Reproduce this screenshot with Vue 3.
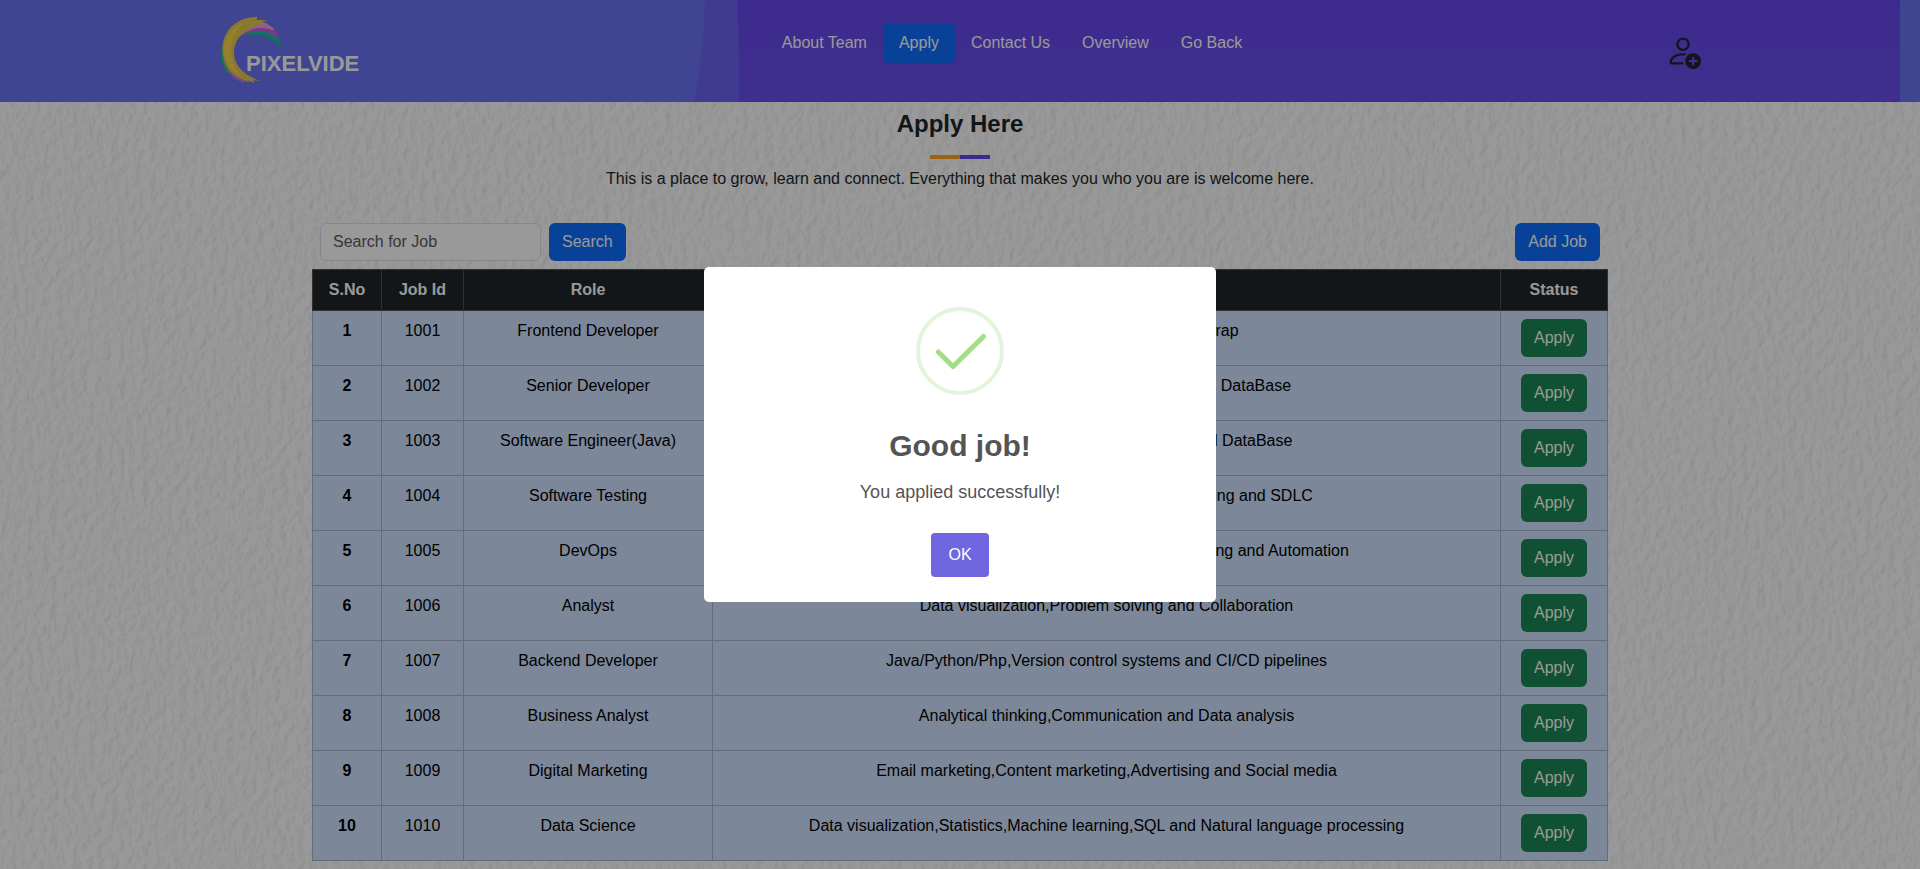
<script setup>
import { ref } from 'vue'

const query = ref('')
const links = [
  { label: 'About Team' },
  { label: 'Apply', active: true },
  { label: 'Contact Us' },
  { label: 'Overview' },
  { label: 'Go Back' },
]
const jobs = [
  { id: 1001, role: 'Frontend Developer', skills: 'HTML,CSS,JavaScript and Bootstrap' },
  { id: 1002, role: 'Senior Developer', skills: 'HTML,CSS,JavaScript,Bootstrap,API and DataBase' },
  { id: 1003, role: 'Software Engineer(Java)', skills: 'Core Java,Advanced Java,JavaScript and DataBase' },
  { id: 1004, role: 'Software Testing', skills: 'Manual testing,Automation testing,Bug tracking and SDLC' },
  { id: 1005, role: 'DevOps', skills: 'Cloud computing,Version control systems,Deploying and Automation' },
  { id: 1006, role: 'Analyst', skills: 'Data visualization,Problem solving and Collaboration' },
  { id: 1007, role: 'Backend Developer', skills: 'Java/Python/Php,Version control systems and CI/CD pipelines' },
  { id: 1008, role: 'Business Analyst', skills: 'Analytical thinking,Communication and Data analysis' },
  { id: 1009, role: 'Digital Marketing', skills: 'Email marketing,Content marketing,Advertising and Social media' },
  { id: 1010, role: 'Data Science', skills: 'Data visualization,Statistics,Machine learning,SQL and Natural language processing' },
]
const open = ref(true)
</script>

<template>
  <div class="page">
    <svg class="texture" aria-hidden="true">
      <filter id="paper" x="0" y="0" width="100%" height="100%" color-interpolation-filters="sRGB">
        <feTurbulence type="fractalNoise" baseFrequency="0.13 0.1" numOctaves="3" seed="4" />
        <feColorMatrix type="matrix" values="0 0 0 0 0  0 0 0 0 0  0 0 0 0 0  1 0 0 0 0" />
        <feDiffuseLighting surfaceScale="0.35" diffuseConstant="1.14" lighting-color="#ffffff">
          <feDistantLight azimuth="200" elevation="60" />
        </feDiffuseLighting>
      </filter>
      <rect width="100%" height="100%" filter="url(#paper)" />
    </svg>

    <header class="header">
      <svg class="header-art" viewBox="0 0 1920 102" preserveAspectRatio="none" aria-hidden="true">
        <defs>
          <linearGradient id="violet" x1="0" y1="0" x2="0" y2="1">
            <stop offset="0" stop-color="#6647ee" />
            <stop offset="1" stop-color="#694fec" />
          </linearGradient>
          <linearGradient id="indigo" x1="0" y1="0" x2="1" y2="0">
            <stop offset="0" stop-color="#6a73f5" />
            <stop offset="1" stop-color="#6976f0" />
          </linearGradient>
        </defs>
        <rect width="1920" height="102" fill="url(#indigo)" />
        <path d="M705 0Q704 50 694 102H1900V0Z" fill="#6c62f0" />
        <path d="M737 0Q740 50 739 102H1900V0Z" fill="url(#violet)" />
      </svg>
      <a class="brand" href="#" aria-label="Pixelvide">
        <svg viewBox="0 0 140 68" width="140" height="68">
          <path d="M6 22C0 32 1 47 8 56L14 57Q6 42 10 25Z" fill="#1fc777" />
          <path d="M4 40C6 53 14 62 25 66L27 60Q12 50 10 31Z" fill="#d47be0" />
          <path d="M26 18C42 8 58 17 64 33C54 20 42 15 26 19Z" fill="#17c77c" />
          <path d="M26 17C40 7 55 12 62 26C50 16 39 14 25 18Z" fill="#2fb3c4" />
          <path d="M21 16C33 4 46 6 52 10L58 15L60 21C47 11 33 12 20 20Z" fill="#cf5bdc" />
          <path d="M18 17C28 3 41 3 47 6L56 12L53 13C40 9 29 11 18 22Z" fill="#eaa6e2" />
          <path d="M38 0Q26 0 17 6C6 13 2 26 4 38C6 51 14 58 21 61L31 66L28 63L36 66L34 63L42 64C26 59 16 50 15 37C14 23 25 10 46 6L42 5L49 3L38 3Z" fill="#e6c94a" />
          <path d="M5 35Q5 13 24 6Q13 16 12 30Q11 48 22 59Q7 52 5 35Z" fill="#f4d84c" />
          <text x="27" y="54" fill="#fff">PIXELVIDE</text>
        </svg>
      </a>
      <nav class="nav">
        <a v-for="link in links" :key="link.label" href="#" :class="{ active: link.active }">{{ link.label }}</a>
      </nav>
      <a class="account" href="#" aria-label="Add account">
        <svg viewBox="0 0 16 16" width="36" height="36" fill="currentColor">
          <path d="M12.5 16a3.5 3.5 0 1 0 0-7 3.5 3.5 0 0 0 0 7m.5-5v1h1a.5.5 0 0 1 0 1h-1v1a.5.5 0 0 1-1 0v-1h-1a.5.5 0 0 1 0-1h1v-1a.5.5 0 0 1 1 0m-2-6a3 3 0 1 1-6 0 3 3 0 0 1 6 0M8 7a2 2 0 1 0 0-4 2 2 0 0 0 0 4" />
          <path d="M8.256 14a4.5 4.5 0 0 1-.229-1.004H3c.001-.246.154-.986.832-1.664C4.484 10.68 5.711 10 8 10q.39 0 .74.025c.226-.341.496-.65.804-.918Q8.844 9.002 8 9c-5 0-6 3-6 4s1 1 1 1z" />
        </svg>
      </a>
    </header>

    <main class="content">
      <h1>Apply Here</h1>
      <div class="rule"></div>
      <p class="lead">This is a place to grow, learn and connect. Everything that makes you who you are is welcome here.</p>

      <div class="toolbar">
        <form class="search" @submit.prevent>
          <input v-model="query" type="search" placeholder="Search for Job" aria-label="Search for Job" />
          <button class="btn primary" type="submit">Search</button>
        </form>
        <button class="btn primary" type="button">Add Job</button>
      </div>

      <table>
        <colgroup>
          <col class="c-no" />
          <col class="c-id" />
          <col class="c-role" />
          <col />
          <col class="c-status" />
        </colgroup>
        <thead>
          <tr>
            <th scope="col">S.No</th>
            <th scope="col">Job Id</th>
            <th scope="col">Role</th>
            <th scope="col">Skills</th>
            <th scope="col">Status</th>
          </tr>
        </thead>
        <tbody>
          <tr v-for="(job, i) in jobs" :key="job.id">
            <th scope="row">{{ i + 1 }}</th>
            <td>{{ job.id }}</td>
            <td>{{ job.role }}</td>
            <td>{{ job.skills }}</td>
            <td><button class="btn success" type="button" @click="open = true">Apply</button></td>
          </tr>
        </tbody>
      </table>
    </main>

    <div v-if="open" class="backdrop">
      <div class="dialog" role="dialog" aria-modal="true" aria-labelledby="dialog-title">
        <svg class="tick" viewBox="0 0 88 88" width="88" height="88" fill="none" aria-hidden="true">
          <circle cx="44" cy="44" r="42" stroke="#a5dc86" stroke-opacity="0.3" stroke-width="4" />
          <path d="M22.300 45L37 59.500L67.500 29.500" stroke="#a5dc86" stroke-width="5" stroke-linecap="round" stroke-linejoin="round" />
        </svg>
        <h2 id="dialog-title">Good job!</h2>
        <p>You applied successfully!</p>
        <button class="confirm" type="button" @click="open = false">OK</button>
      </div>
    </div>
  </div>
</template>

<style>
body {
  margin: 0;
  background: #fafafa;
}
</style>

<style scoped>
.page {
  position: relative;
  min-height: 100vh;
  font: 16px/24px "Liberation Sans", Arial, sans-serif;
  color: #212529;
}
.page *,
.page *::before {
  box-sizing: border-box;
}
.texture {
  position: absolute;
  inset: 0;
  width: 100%;
  height: 100%;
}
.header {
  position: relative;
  display: flex;
  align-items: center;
  justify-content: space-between;
  padding: 17px 219px;
}
.header-art {
  position: absolute;
  inset: 0;
  width: 100%;
  height: 100%;
}
.brand,
.nav,
.account {
  position: relative;
}
.brand svg,
.account svg {
  display: block;
  overflow: visible;
}
.brand text {
  font: bold 22px "Liberation Sans", Arial, sans-serif;
}
.nav {
  display: flex;
  margin-bottom: 16px;
}
.nav a {
  padding: 8px 16px;
  border-radius: 6px;
  color: #fff;
  text-decoration: none;
}
.nav a.active {
  background: #0d6efd;
}
.account {
  color: #212529;
}
.content {
  position: relative;
  width: 67.5%;
  margin: 0 auto;
  padding-bottom: 7px;
}
h1 {
  margin: 0;
  padding-top: 7px;
  font-size: 24px;
  line-height: 29px;
  text-align: center;
}
.rule {
  width: 60px;
  height: 4px;
  margin: 17px auto 8px;
  background: linear-gradient(90deg, #ffa51e 50%, #6647ee 50%);
}
.lead {
  margin: 0 0 32px;
  text-align: center;
}
.toolbar {
  display: flex;
  justify-content: space-between;
  padding: 0 8px;
  margin-bottom: 8px;
}
.search {
  display: flex;
  gap: 8px;
}
.search input {
  width: 221px;
  height: 38px;
  padding: 6px 12px;
  border: 1px solid #dee2e6;
  border-radius: 6px;
  background: #fff;
  color: #212529;
  font: inherit;
  appearance: none;
}
.search input::placeholder {
  color: #595c5f;
  opacity: 1;
}
.btn {
  padding: 7px 13px;
  border: 0;
  border-radius: 6px;
  color: #fff;
  font: inherit;
  cursor: pointer;
}
.primary {
  background: #0d6efd;
}
.success {
  background: #198754;
}
table {
  width: 100%;
  table-layout: fixed;
  border-collapse: collapse;
  text-align: center;
}
.c-no {
  width: 69px;
}
.c-id {
  width: 82px;
}
.c-role {
  width: 249px;
}
.c-status {
  width: 107px;
}
th,
td {
  padding: 8px;
  vertical-align: top;
}
thead th {
  border: 1px solid #4d5154;
  background: #212529;
  color: #fff;
}
tbody th,
tbody td {
  border: 1px solid #a6b5cc;
  background: #cfe2ff;
  color: #000;
}
td .btn {
  display: block;
  margin: 0 auto;
}
.backdrop {
  position: absolute;
  inset: 0;
  display: grid;
  place-items: center;
  background: rgba(0, 0, 0, 0.4);
}
.dialog {
  display: flex;
  flex-direction: column;
  align-items: center;
  width: 512px;
  max-width: 100%;
  padding: 40px 16px 25px;
  border-radius: 5px;
  background: #fff;
  color: #545454;
}
.dialog h2 {
  margin: 33px 0 16px;
  font-size: 30px;
  line-height: 36px;
}
.dialog p {
  margin: 0 0 29px;
  font-size: 18px;
  line-height: 24px;
}
.confirm {
  padding: 10px 17px;
  border: 0;
  border-radius: 4px;
  background: #7066e0;
  color: #fff;
  font: inherit;
  cursor: pointer;
}
</style>
